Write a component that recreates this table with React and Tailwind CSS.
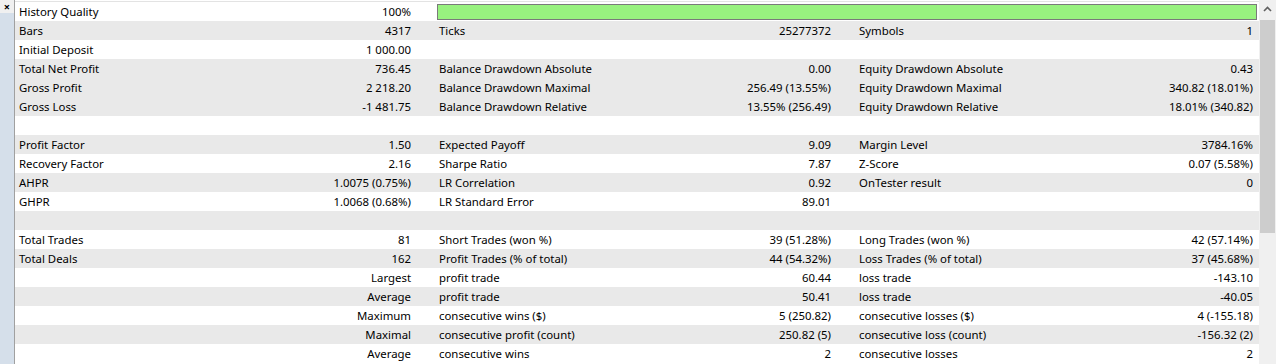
import React from 'react'

const rows = [
    { a: ['History Quality', '100%'], bar: true },
    { a: ['Bars', '4317'], b: ['Ticks', '25277372'], c: ['Symbols', '1'] },
    { a: ['Initial Deposit', '1 000.00'] },
    { a: ['Total Net Profit', '736.45'], b: ['Balance Drawdown Absolute', '0.00'], c: ['Equity Drawdown Absolute', '0.43'] },
    { a: ['Gross Profit', '2 218.20'], b: ['Balance Drawdown Maximal', '256.49 (13.55%)'], c: ['Equity Drawdown Maximal', '340.82 (18.01%)'] },
    { a: ['Gross Loss', '-1 481.75'], b: ['Balance Drawdown Relative', '13.55% (256.49)'], c: ['Equity Drawdown Relative', '18.01% (340.82)'] },
    {},
    { a: ['Profit Factor', '1.50'], b: ['Expected Payoff', '9.09'], c: ['Margin Level', '3784.16%'] },
    { a: ['Recovery Factor', '2.16'], b: ['Sharpe Ratio', '7.87'], c: ['Z-Score', '0.07 (5.58%)'] },
    { a: ['AHPR', '1.0075 (0.75%)'], b: ['LR Correlation', '0.92'], c: ['OnTester result', '0'] },
    { a: ['GHPR', '1.0068 (0.68%)'], b: ['LR Standard Error', '89.01'] },
    {},
    { a: ['Total Trades', '81'], b: ['Short Trades (won %)', '39 (51.28%)'], c: ['Long Trades (won %)', '42 (57.14%)'] },
    { a: ['Total Deals', '162'], b: ['Profit Trades (% of total)', '44 (54.32%)'], c: ['Loss Trades (% of total)', '37 (45.68%)'] },
    { a: ['', 'Largest'], b: ['profit trade', '60.44'], c: ['loss trade', '-143.10'] },
    { a: ['', 'Average'], b: ['profit trade', '50.41'], c: ['loss trade', '-40.05'] },
    { a: ['', 'Maximum'], b: ['consecutive wins ($)', '5 (250.82)'], c: ['consecutive losses ($)', '4 (-155.18)'] },
    { a: ['', 'Maximal'], b: ['consecutive profit (count)', '250.82 (5)'], c: ['consecutive loss (count)', '-156.32 (2)'] },
    { a: ['', 'Average'], b: ['consecutive wins', '2'], c: ['consecutive losses', '2'] },
]

// rows painted grey (the third one is the hovered line)
const grey = [1, 3, 4, 5, 7, 9, 11, 13, 15, 17]

function Cell({ pair, last }) {
    return (
        <div className={`flex items-center justify-between pl-[4px] ${last ? 'pr-[6px]' : 'pr-[24px]'}`}>
            <span>{pair ? pair[0] : ''}</span>
            <span>{pair ? pair[1] : ''}</span>
        </div>
    )
}

export default function App() {
    return (
        <div className="flex h-[364px] w-[1276px] overflow-hidden bg-white text-[11.4px] text-black" style={{ fontFamily: '"Noto Sans", "Open Sans", sans-serif' }}>
            <div className="flex w-[15px] flex-col border-r border-[#a0a0a0]">
                <div className="flex h-[13px] items-center justify-center bg-[#f0f0f0] pt-[1px] text-[11px] font-bold leading-[12px]">×</div>
                <div className="flex-1 bg-[#d5dfea]" />
            </div>

            <div className="flex flex-1 flex-col pt-[1px]">
                <div className="border-t border-[#e3e3e3]" />
                {rows.map((r, i) => (
                    <div key={i} className={`grid h-[19px] shrink-0 grid-cols-[420px_420px_1fr] leading-[19px] ${grey.includes(i) ? 'bg-[#e9e9e9]' : 'bg-white'}`}>
                        <Cell pair={r.a} />
                        {r.bar ? (
                            <div className="col-span-2 flex items-center pl-[2px] pr-[2px]">
                                <div className="h-[16px] w-full border border-[#7a7a7a] bg-[#98f27f]" />
                            </div>
                        ) : (
                            <>
                                <Cell pair={r.b} />
                                <Cell pair={r.c} last />
                            </>
                        )}
                    </div>
                ))}
            </div>

            <div className="flex w-[17px] flex-col bg-[#f0f0f0]">
                <div className="flex h-[17px] items-center justify-center">
                    <svg width="9" height="6" viewBox="0 0 9 6">
                        <path d="M1 5 L4.5 1.5 L8 5" fill="none" stroke="#606060" strokeWidth="1.6" />
                    </svg>
                </div>
                <div className="mx-[1px] mt-[3px] h-[213px] bg-[#cdcdcd]" />
            </div>
        </div>
    )
}
